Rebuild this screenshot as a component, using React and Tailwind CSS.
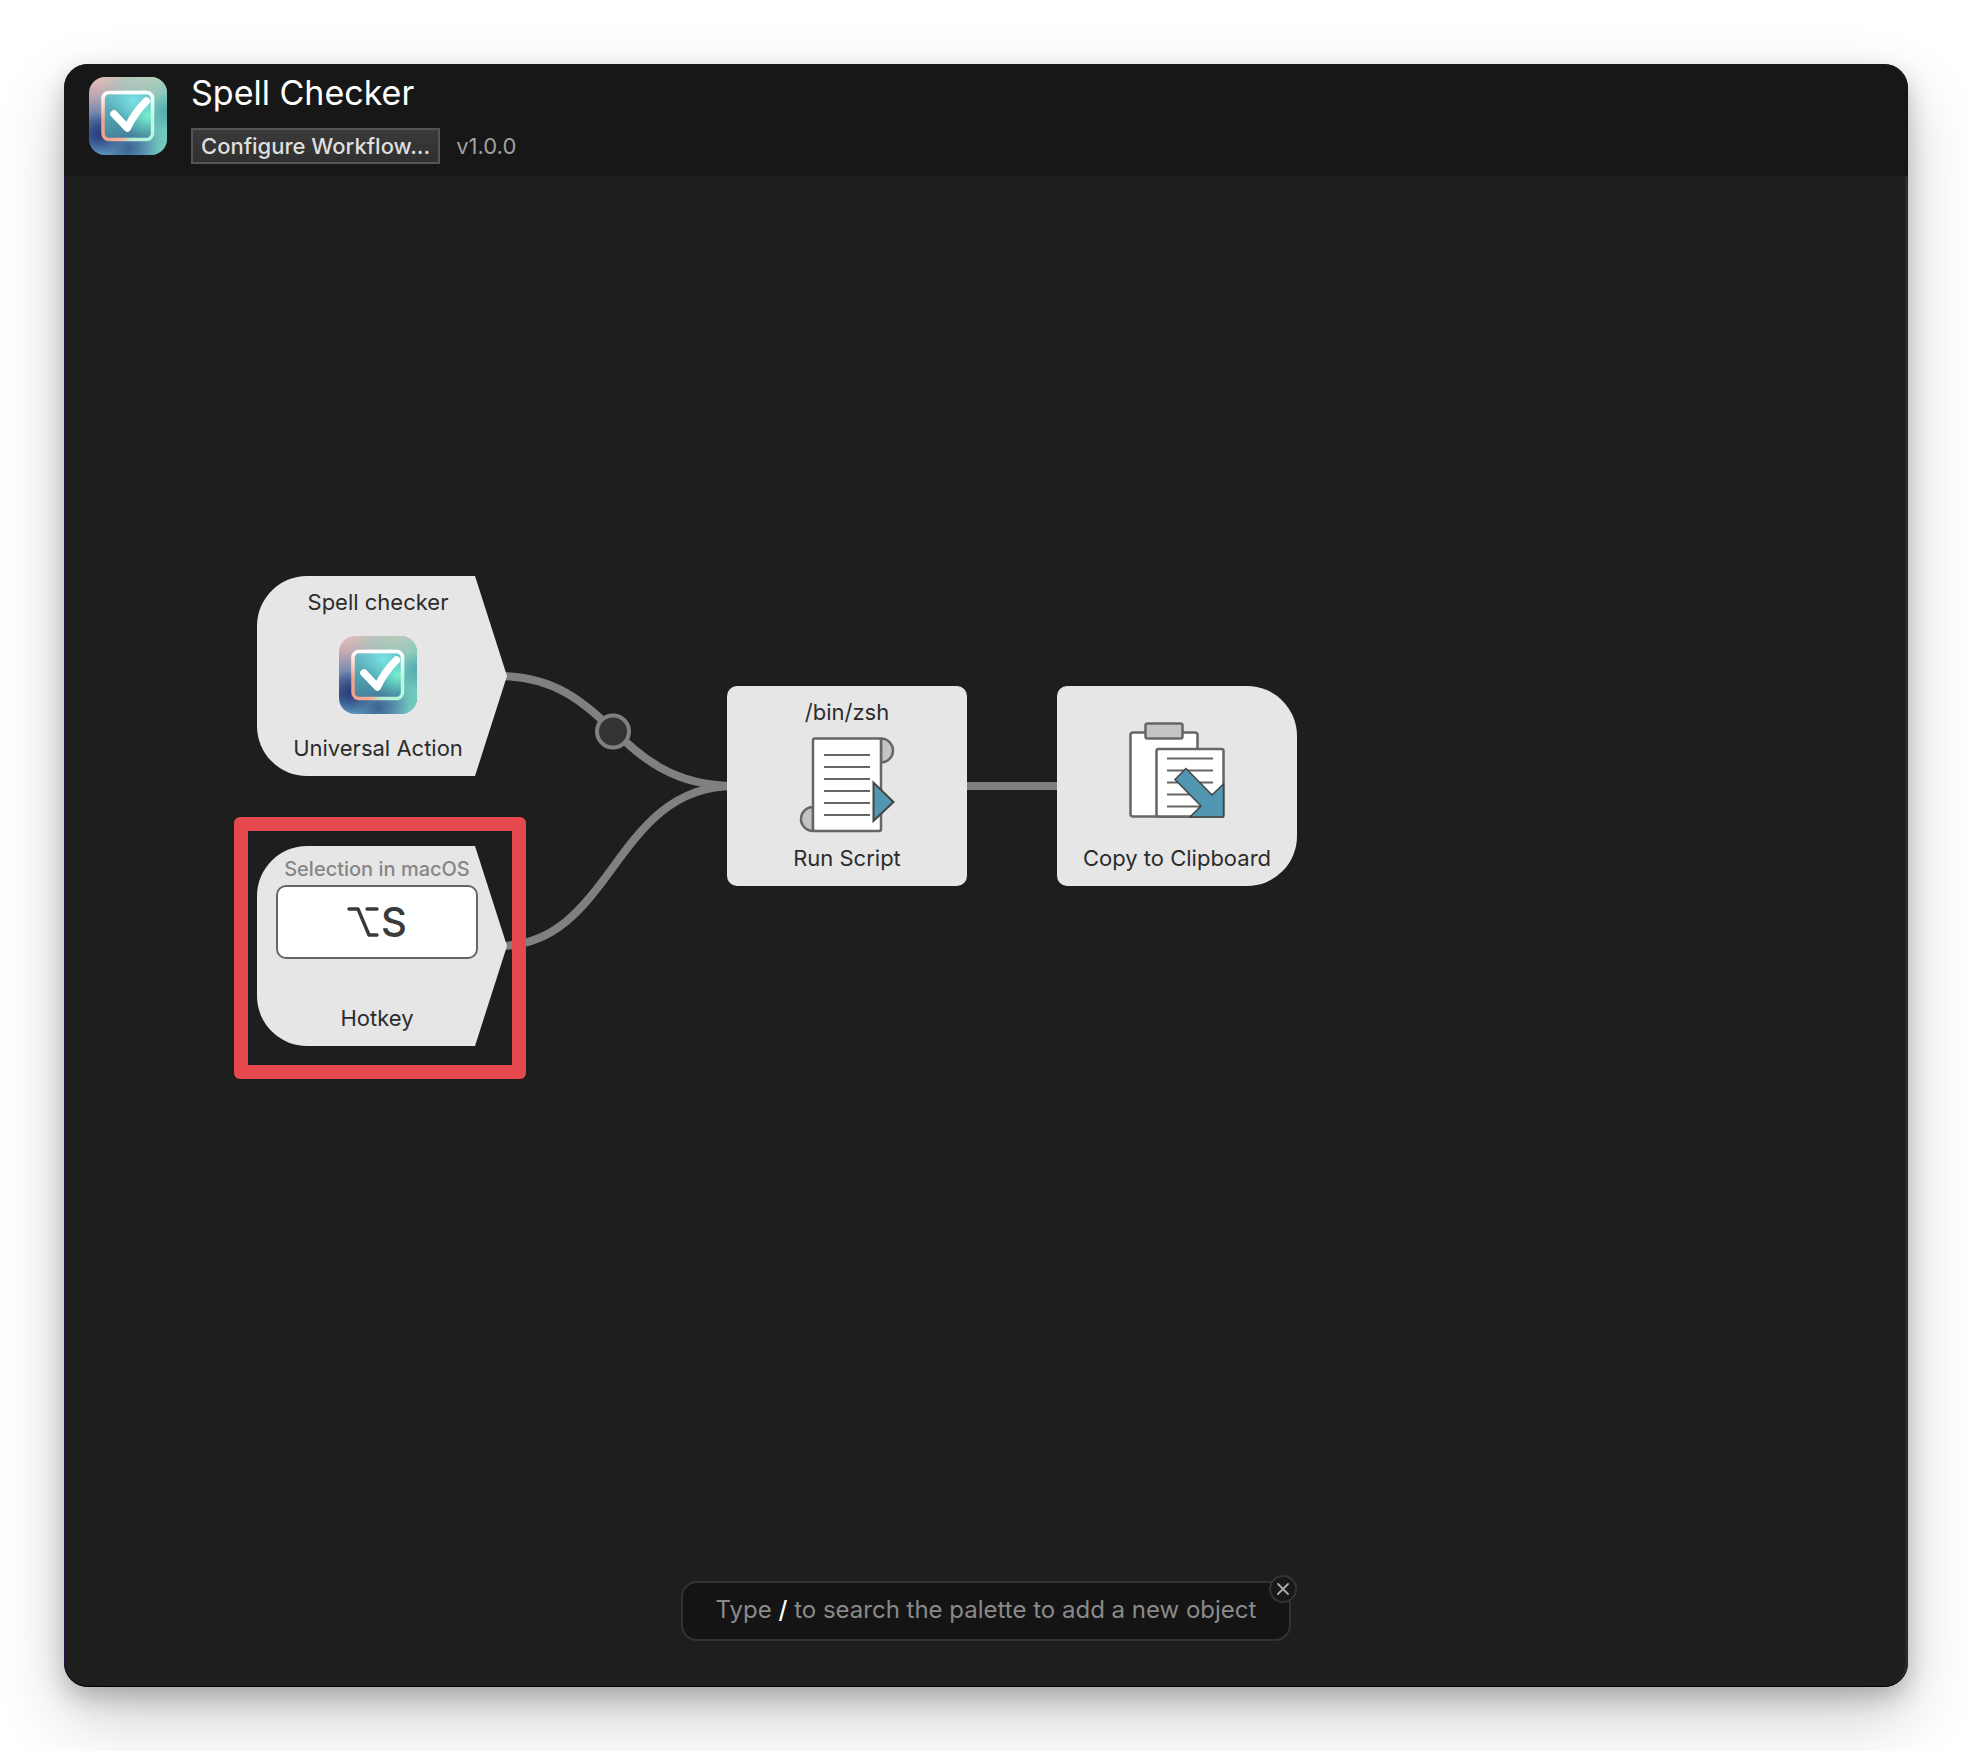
function AppIcon({ id }) {
  return (
    <svg viewBox="0 0 78 78" className="size-[78px] shrink-0" aria-hidden="true">
      <defs>
        <linearGradient id={`${id}-base`} x1="0" y1="0" x2="0" y2="1">
          <stop offset="0" stopColor="#e6bfb6" />
          <stop offset="0.22" stopColor="#c0a8b4" />
          <stop offset="0.48" stopColor="#6f86ae" />
          <stop offset="0.75" stopColor="#3d6299" />
          <stop offset="1" stopColor="#5f9fc6" />
        </linearGradient>
        <linearGradient id={`${id}-right`} x1="0" y1="0" x2="1" y2="0">
          <stop offset="0.1" stopColor="#84c8c4" stopOpacity="0" />
          <stop offset="0.5" stopColor="#84c8c4" stopOpacity="0.5" />
          <stop offset="1" stopColor="#6fcdbd" />
        </linearGradient>
        <radialGradient id={`${id}-sand`} cx="0.8" cy="-0.1" r="0.55">
          <stop offset="0" stopColor="#c6cab6" />
          <stop offset="1" stopColor="#a8cdbd" stopOpacity="0" />
        </radialGradient>
        <radialGradient id={`${id}-teal`} cx="1" cy="0.45" r="0.25">
          <stop offset="0" stopColor="#52abae" />
          <stop offset="1" stopColor="#52abae" stopOpacity="0" />
        </radialGradient>
        <radialGradient id={`${id}-navy`} cx="0.16" cy="0.72" r="0.28">
          <stop offset="0" stopColor="#283a78" />
          <stop offset="1" stopColor="#283a78" stopOpacity="0" />
        </radialGradient>
        <radialGradient id={`${id}-deep`} cx="0.5" cy="0.92" r="0.4">
          <stop offset="0" stopColor="#3d6496" />
          <stop offset="1" stopColor="#3d6496" stopOpacity="0" />
        </radialGradient>
        <linearGradient id={`${id}-inner`} x1="0" y1="0" x2="0.3" y2="1">
          <stop offset="0" stopColor="#6fc0cc" />
          <stop offset="0.5" stopColor="#4fa4b0" />
          <stop offset="1" stopColor="#477f9c" />
        </linearGradient>
        <radialGradient id={`${id}-mint`} cx="0.9" cy="0.5" r="0.55">
          <stop offset="0" stopColor="#79f3cb" />
          <stop offset="1" stopColor="#5fd8c4" stopOpacity="0" />
        </radialGradient>
        <radialGradient id={`${id}-sky`} cx="0.6" cy="0.15" r="0.5">
          <stop offset="0" stopColor="#79e0e4" />
          <stop offset="1" stopColor="#79e0e4" stopOpacity="0" />
        </radialGradient>
        <linearGradient id={`${id}-frame`} x1="0" y1="0.7" x2="1" y2="0.5">
          <stop offset="0" stopColor="#f3a08c" />
          <stop offset="0.3" stopColor="#f3b09c" />
          <stop offset="0.5" stopColor="#b4f0d4" />
          <stop offset="1" stopColor="#b6fbe2" />
        </linearGradient>
        <linearGradient id={`${id}-glow`} x1="0" y1="0" x2="0" y2="1">
          <stop offset="0" stopColor="#fff" />
          <stop offset="0.6" stopColor="#fff" stopOpacity="0" />
        </linearGradient>
        <clipPath id={`${id}-clip`}>
          <rect width="78" height="78" rx="16" />
        </clipPath>
      </defs>
      <g clipPath={`url(#${id}-clip)`}>
        <rect width="78" height="78" fill={`url(#${id}-base)`} />
        <rect width="78" height="78" fill={`url(#${id}-right)`} />
        <rect width="78" height="78" fill={`url(#${id}-sand)`} />
        <rect width="78" height="78" fill={`url(#${id}-teal)`} />
        <rect width="78" height="78" fill={`url(#${id}-navy)`} />
        <rect width="78" height="78" fill={`url(#${id}-deep)`} />
      </g>
      <rect x="14" y="16" width="50" height="46" rx="6" fill={`url(#${id}-inner)`} />
      <rect x="14" y="16" width="50" height="46" rx="6" fill={`url(#${id}-mint)`} />
      <rect x="14" y="16" width="50" height="46" rx="6" fill={`url(#${id}-sky)`} />
      <rect x="14" y="15.5" width="49.5" height="47" rx="6" fill="none" stroke={`url(#${id}-frame)`} strokeWidth="3.5" />
      <rect x="14" y="15.5" width="49.5" height="47" rx="6" fill="none" stroke={`url(#${id}-glow)`} strokeWidth="3.5" />
      <path d="M25 37 38.300 51Q46 35 57.500 24" fill="none" stroke="#fff" strokeWidth="7.500" strokeLinecap="round" strokeLinejoin="round" />
    </svg>
  );
}

function ScriptIcon() {
  return (
    <svg viewBox="0 0 96 96" className="size-24" aria-hidden="true">
      <g stroke="#666" strokeWidth="2.5">
        <path d="M82 1.500a12 12 0 0 1 0 24Z" fill="#c4c4c4" />
        <path d="M14 70a12 12 0 0 0 0 24Z" fill="#c4c4c4" />
        <rect x="14" y="1.500" width="68" height="92.500" rx="2" fill="#fff" />
        <path d="M25 18h46M25 30h46M25 42h46M25 54h46M25 66h46M25 78h46" strokeWidth="2" />
      </g>
      <path d="M74.500 45.500v38.500l20-19Z" fill="#5297b1" stroke="#444" strokeWidth="2" />
    </svg>
  );
}

function ClipboardIcon() {
  return (
    <svg viewBox="0 0 96 96" className="size-24" aria-hidden="true">
      <g stroke="#666" strokeWidth="2.500">
        <rect x="1.500" y="10.500" width="67" height="84" rx="2.500" fill="#fff" />
        <rect x="16.500" y="1.500" width="37" height="15" rx="2" fill="#c4c4c4" />
        <rect x="27.500" y="27" width="67" height="67.500" rx="2" fill="#fff" />
        <path d="M38 36.500h46M38 48.500h46M38 60.500h46M38 72.500h46M38 84.500h46" strokeWidth="2" />
      </g>
      <path d="M57 46.500 46 57.500 72 84 61 95h33.500V62L83 73Z" fill="#5297b1" stroke="#444" strokeWidth="1.500" />
    </svg>
  );
}

function OptionGlyph() {
  return (
    <svg viewBox="0 0 32 30" className="h-[30px] w-8" aria-label="Option" role="img">
      <path d="M2 2h9l11 26h8M20 2h10" fill="none" stroke="#3a3a3a" strokeWidth="3.400" strokeLinecap="round" strokeLinejoin="round" />
    </svg>
  );
}

const label = "text-[22px] leading-7 text-[#2c2c2c] whitespace-nowrap";

function TriggerShape() {
  return (
    <svg viewBox="0 0 250 200" className="absolute inset-0 -z-10 h-full w-full" aria-hidden="true">
      <path d="M50 0H218L250 100 218 200H50A50 50 0 0 1 0 150V50A50 50 0 0 1 50 0Z" fill="#e6e6e6" />
    </svg>
  );
}

export default function App() {
  return (
    <div className="flex min-h-screen bg-white p-16 font-['Inter','Liberation_Sans',sans-serif]">
      <main className="flex flex-1 flex-col overflow-hidden rounded-3xl bg-[#1e1e1e] shadow-[0_30px_70px_rgba(0,0,0,0.2),0_10px_24px_rgba(0,0,0,0.22)]">
        <header className="flex h-28 shrink-0 gap-6 bg-[#171717] pt-[13px] pl-[25px]">
          <AppIcon id="header" />
          <div className="flex flex-col items-start">
            <h1 className="text-[34px] leading-8 text-white">Spell Checker</h1>
            <div className="mt-[19px] flex items-center gap-4">
              <button type="button" className="h-9 border-2 border-[#555] bg-linear-to-b from-[#3a3a3a] to-[#303030] px-2 text-[22px] leading-7 font-medium text-[#dfdfdf]">
                Configure Workflow...
              </button>
              <span className="text-[22px] leading-7 text-[#a0a0a0]">v1.0.0</span>
            </div>
          </div>
        </header>

        <section aria-label="Workflow canvas" className="relative flex-1 rounded-b-3xl shadow-[inset_0_-1px_#000,inset_1px_0_#2b1248,inset_-3px_0_#2a2a2a]">
          <svg className="absolute inset-0 h-full w-full" aria-hidden="true">
            <g fill="none" stroke="#808080" strokeWidth="8">
              <path d="M435 500C549 500 549 610 670 610" />
              <path d="M435 770C549 770 549 610 670 610" />
              <path d="M900 610H1000" />
            </g>
            <circle cx="549" cy="555.500" r="16" fill="#333" stroke="#808080" strokeWidth="4" />
          </svg>

          <article className="absolute top-[400px] left-[193px] isolate flex h-[200px] w-[250px] flex-col items-center justify-between pt-3 pr-2 pb-3.5">
            <TriggerShape />
            <p className={label}>Spell checker</p>
            <AppIcon id="trigger" />
            <h2 className={label}>Universal Action</h2>
          </article>

          <article className="absolute top-[670px] left-[193px] isolate flex h-[200px] w-[250px] flex-col items-center pt-[11px] pr-2.5 pb-3.5">
            <TriggerShape />
            <p className="text-xl leading-6 font-medium whitespace-nowrap text-[#868686]">Selection in macOS</p>
            <button type="button" className="mt-1 flex h-[74px] w-[202px] items-center justify-center gap-0.5 rounded-[10px] border-2 border-[#666] bg-white text-[40px] font-medium text-[#3a3a3a]">
              <OptionGlyph />
              S
            </button>
            <h2 className={`mt-auto ${label}`}>Hotkey</h2>
          </article>

          <div className="absolute top-[641px] left-[170px] h-[262px] w-[292px] rounded-md bg-[#e5484c] [clip-path:polygon(evenodd,0_0,100%_0,100%_100%,0_100%,0_0,14px_14px,278px_14px,278px_248px,14px_248px,14px_14px)]" />

          <article className="absolute top-[510px] left-[663px] flex h-[200px] w-60 flex-col items-center justify-between rounded-[10px] bg-[#e6e6e6] pt-3 pb-3.5">
            <p className={label}>/bin/zsh</p>
            <ScriptIcon />
            <h2 className={label}>Run Script</h2>
          </article>

          <article className="absolute top-[510px] left-[993px] flex h-[200px] w-60 flex-col items-center justify-between rounded-l-[10px] rounded-r-[50px] bg-[#e6e6e6] pt-9 pb-3.5">
            <ClipboardIcon />
            <h2 className={label}>Copy to Clipboard</h2>
          </article>

          <div className="absolute bottom-[46px] left-1/2 flex h-[60px] w-[610px] -translate-x-1/2 items-center justify-center rounded-2xl border-2 border-[#333] bg-[#141414] pb-0.5 text-2xl whitespace-nowrap text-[#8a8a8a]">
            <p>Type <span className="font-medium text-white">/</span> to search the palette to add a new object</p>
            <button type="button" aria-label="Close" className="absolute -top-2 -right-2 flex size-7 items-center justify-center rounded-full border-2 border-[#333] bg-[#191919] text-[#aaa]">
              <svg viewBox="0 0 12 12" className="size-3" aria-hidden="true">
                <path d="M1 1l10 10M11 1 1 11" stroke="currentColor" strokeWidth="1.800" strokeLinecap="round" />
              </svg>
            </button>
          </div>
        </section>
      </main>
    </div>
  );
}
